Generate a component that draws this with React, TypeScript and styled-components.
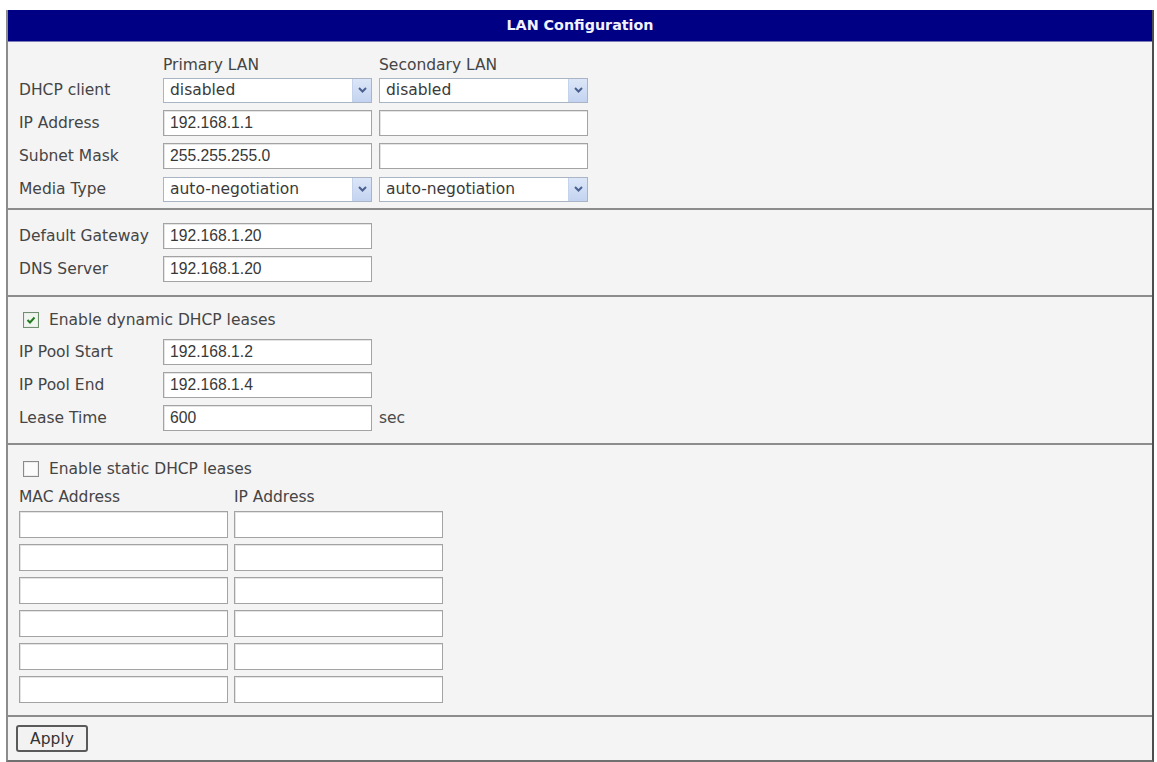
import styled, { createGlobalStyle } from "styled-components";

const GlobalStyle = createGlobalStyle`
  body {
    margin: 0;
    background: #fff;
    font-family: "DejaVu Sans", Verdana, sans-serif;
    color: #454545;
  }
`;

const staticLeases = [0, 1, 2, 3, 4, 5];

export default function App() {
  return (
    <>
      <GlobalStyle />
      <Frame onSubmit={(e) => e.preventDefault()}>
        <Header>LAN Configuration</Header>

        <Section $pt={14} $pb={6} $first>
          <ColumnHeads>
            <span />
            <span>Primary LAN</span>
            <span>Secondary LAN</span>
          </ColumnHeads>
          <Rows>
            <FieldRow>
              <Label>DHCP client</Label>
              <Dropdown value="disabled" />
              <Dropdown value="disabled" />
            </FieldRow>
            <FieldRow>
              <Label>IP Address</Label>
              <TextBox defaultValue="192.168.1.1" />
              <TextBox />
            </FieldRow>
            <FieldRow>
              <Label>Subnet Mask</Label>
              <TextBox defaultValue="255.255.255.0" />
              <TextBox />
            </FieldRow>
            <FieldRow>
              <Label>Media Type</Label>
              <Dropdown value="auto-negotiation" />
              <Dropdown value="auto-negotiation" />
            </FieldRow>
          </Rows>
        </Section>

        <Section $pt={13} $pb={13}>
          <Rows>
            <FieldRow>
              <Label>Default Gateway</Label>
              <TextBox defaultValue="192.168.1.20" />
            </FieldRow>
            <FieldRow>
              <Label>DNS Server</Label>
              <TextBox defaultValue="192.168.1.20" />
            </FieldRow>
          </Rows>
        </Section>

        <Section $pt={14} $pb={12}>
          <CheckRow>
            <Check type="checkbox" defaultChecked />
            <span>Enable dynamic DHCP leases</span>
          </CheckRow>
          <Rows>
            <FieldRow>
              <Label>IP Pool Start</Label>
              <TextBox defaultValue="192.168.1.2" />
            </FieldRow>
            <FieldRow>
              <Label>IP Pool End</Label>
              <TextBox defaultValue="192.168.1.4" />
            </FieldRow>
            <FieldRow>
              <Label>Lease Time</Label>
              <TextBox defaultValue="600" />
              <Unit>sec</Unit>
            </FieldRow>
          </Rows>
        </Section>

        <Section $pt={15} $pb={12}>
          <CheckRow>
            <Check type="checkbox" />
            <span>Enable static DHCP leases</span>
          </CheckRow>
          <LeaseTable>
            <TableHead>MAC Address</TableHead>
            <TableHead>IP Address</TableHead>
            {staticLeases.map((i) => (
              <LeaseCells key={i}>
                <TextBox $h={27} />
                <TextBox $h={27} />
              </LeaseCells>
            ))}
          </LeaseTable>
        </Section>

        <Footer>
          <ApplyButton type="submit">Apply</ApplyButton>
        </Footer>
      </Frame>
    </>
  );
}

const Dropdown = ({ value }: { value: string }) => (
  <SelectWrap>
    <Select defaultValue={value}>
      <option>{value}</option>
    </Select>
    <ArrowButton>
      <svg width="9" height="6" viewBox="0 0 9 6">
        <path d="M1 1 L4.5 4.5 L8 1" fill="none" stroke="#4a6190" strokeWidth="2" />
      </svg>
    </ArrowButton>
  </SelectWrap>
);

// Styling Components
const Frame = styled.form`
  margin: 10px 0 0 6px;
  width: 1148px;
  box-sizing: border-box;
  background: #f4f4f4;
  border-left: 2px solid #8c8c8c;
  border-right: 2px solid #4e4e4e;
  border-bottom: 2px solid #707070;
`;

const Header = styled.div`
  height: 31px;
  line-height: 31px;
  background: #000084;
  border-bottom: 1px solid #7a7ab8;
  color: #f2f2ff;
  font-family: "DejaVu Sans", Verdana, sans-serif;
  font-weight: bold;
  font-size: 14.3px;
  text-align: center;
`;

const Section = styled.div<{ $pt: number; $pb: number; $first?: boolean }>`
  padding: ${(p) => p.$pt}px 11px ${(p) => p.$pb}px;
  border-top: ${(p) => (p.$first ? "none" : "2px solid #8c8c8c")};
`;

const ColumnHeads = styled.div`
  display: grid;
  grid-template-columns: 137px 209px 209px;
  column-gap: 7px;
  height: 18px;
  line-height: 18px;
  font-size: 15.5px;
  margin-bottom: 3px;
`;

const Rows = styled.div`
  display: flex;
  flex-direction: column;
  gap: 7px;
`;

const FieldRow = styled.div`
  display: grid;
  grid-template-columns: 137px 209px 209px;
  column-gap: 7px;
  align-items: center;
  height: 26px;
`;

const Label = styled.span`
  font-size: 15.5px;
  white-space: nowrap;
`;

const Unit = styled.span`
  font-size: 15.5px;
  color: #4a4a4a;
`;

const TextBox = styled.input<{ $h?: number }>`
  box-sizing: border-box;
  width: 209px;
  height: ${(p) => p.$h ?? 26}px;
  margin: 0;
  padding: 0 6px;
  background: #fff;
  border: 1px solid #a3a3a3;
  box-shadow: inset 1px 1px 0 #e4e4e4;
  font-family: "Liberation Sans", Arial, sans-serif;
  font-size: 15.7px;
  color: #383838;
  outline: none;
`;

const SelectWrap = styled.div`
  position: relative;
  width: 209px;
  height: 25px;
`;

const Select = styled.select`
  appearance: none;
  box-sizing: border-box;
  width: 100%;
  height: 100%;
  margin: 0;
  padding: 0 24px 0 6px;
  background: #fff;
  border: 1px solid #a9b4c4;
  font-family: "DejaVu Sans", Verdana, sans-serif;
  font-size: 15.5px;
  color: #3a3a3a;
  outline: none;
`;

const ArrowButton = styled.span`
  position: absolute;
  top: 1px;
  right: 1px;
  bottom: 1px;
  width: 18px;
  display: flex;
  align-items: center;
  justify-content: center;
  background: linear-gradient(#dce6f8, #c3d3f0);
  border-left: 1px solid #c4d2ec;
  pointer-events: none;
`;

const CheckRow = styled.label`
  display: flex;
  align-items: center;
  gap: 10px;
  height: 18px;
  padding-left: 4px;
  margin-bottom: 10px;
  font-size: 15.5px;
`;

const Check = styled.input`
  appearance: none;
  box-sizing: border-box;
  width: 16px;
  height: 16px;
  margin: 0;
  background: #fbfbfb;
  border: 1px solid #8a8a8a;
  box-shadow: inset 0 0 0 1px #ececec;

  &:checked {
    border-color: #6f8f6f;
    background: #eef6ee
      url("data:image/svg+xml;utf8,<svg xmlns='http://www.w3.org/2000/svg' width='14' height='14'><path d='M3.5 7 L6 9.5 L10.5 4.5' fill='none' stroke='%23237a23' stroke-width='2'/></svg>")
      center / 14px 14px no-repeat;
  }
`;

const LeaseTable = styled.div`
  display: grid;
  grid-template-columns: 209px 209px;
  column-gap: 6px;
  row-gap: 6px;
`;

const TableHead = styled.span`
  height: 18px;
  line-height: 18px;
  margin-bottom: -1px;
  font-size: 15.5px;
`;

const LeaseCells = styled.div`
  display: contents;
`;

const Footer = styled.div`
  padding: 8px;
  border-top: 2px solid #8c8c8c;
`;

const ApplyButton = styled.button`
  box-sizing: border-box;
  width: 72px;
  height: 27px;
  padding: 0;
  background: #f2f2f2;
  border: 2px solid #5a5a5a;
  border-radius: 3px;
  font-family: "DejaVu Sans", Verdana, sans-serif;
  font-size: 15.5px;
  color: #333;
`;
